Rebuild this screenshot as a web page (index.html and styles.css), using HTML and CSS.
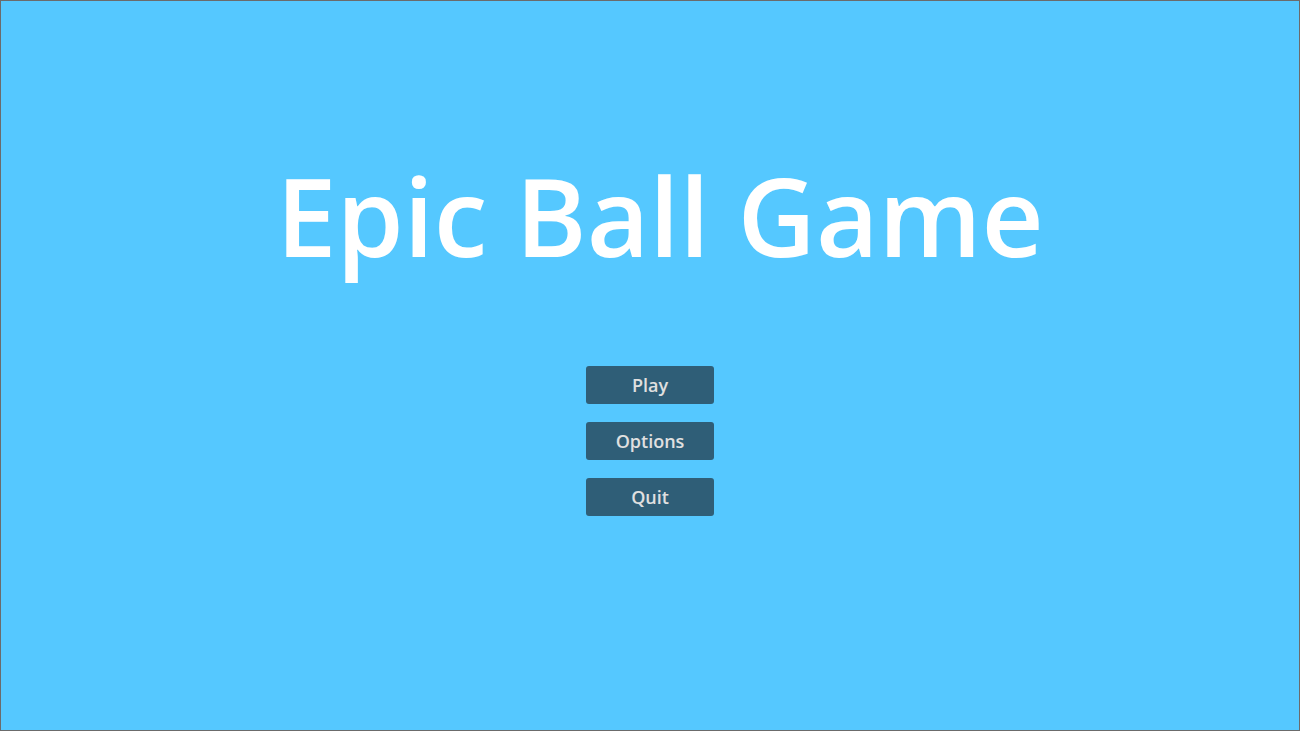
FILE: index.html
```html
<!DOCTYPE html>
<html lang="en">
<head>
  <meta charset="UTF-8" />
  <meta name="viewport" content="width=device-width, initial-scale=1" />
  <title>Epic Ball Game</title>
  <link rel="stylesheet" href="styles.css">
</head>
<body>

<div class="screen">
  <h1 class="title">Epic Ball Game</h1>
  <div class="menu">
    <button class="menu-btn">Play</button>
    <button class="menu-btn">Options</button>
    <button class="menu-btn">Quit</button>
  </div>
</div>

</body>
</html>
```

FILE: styles.css
```css
* { box-sizing: border-box; }
body, html {
  margin: 0; padding: 0; height: 100%;
  font-family: "Open Sans", "Noto Sans", sans-serif;
}
.screen {
  height: 100vh;
  background: #55c8ff;
  border: 1px solid #6b6b6b;
  display: flex;
  flex-direction: column;
  align-items: center;
  padding-top: 140px;
}
.title {
  margin: 0;
  font-size: 108px;
  font-weight: 600;
  line-height: 150px;
  color: #fff;
  padding-left: 20px;
}
.menu {
  margin-top: 75px;
  display: flex;
  flex-direction: column;
  gap: 18px;
}
.menu-btn {
  width: 128px;
  height: 38px;
  padding: 0 0 1px;
  border: none;
  border-radius: 3px;
  background: #2f5e77;
  color: #e0e0e0;
  font-family: inherit;
  font-size: 18px;
  font-weight: 600;
  cursor: pointer;
}
.menu-btn:hover {
  background: #3a6f8a;
}
```
